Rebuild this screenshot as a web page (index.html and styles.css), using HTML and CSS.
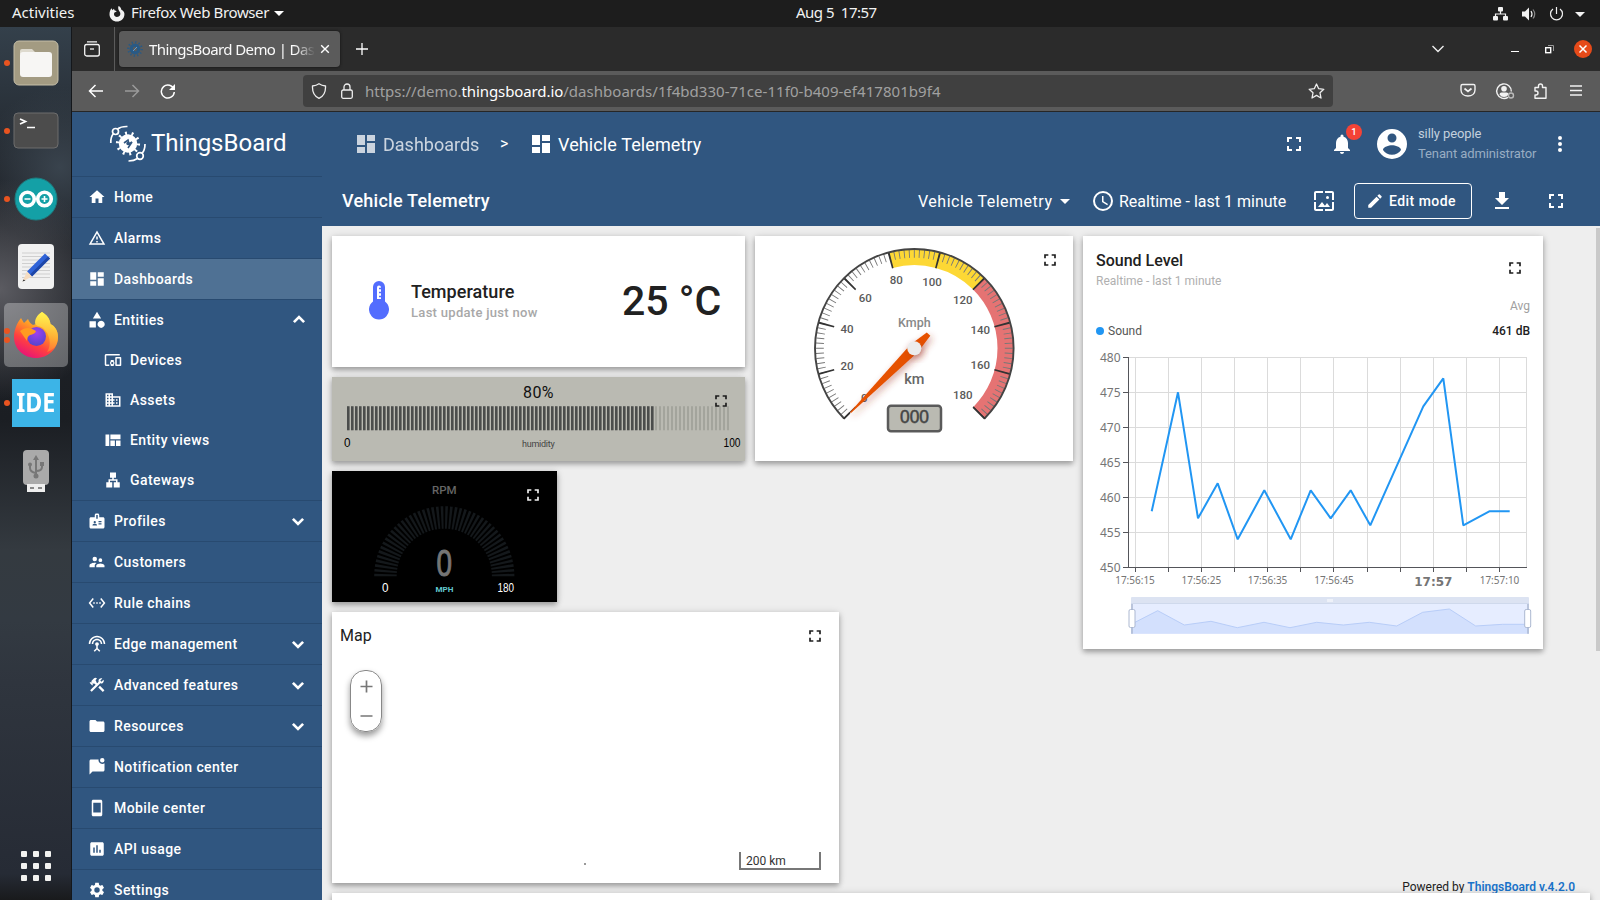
FILE: index.html
```html
<!DOCTYPE html>
<html lang="en">
<head>
<meta charset="utf-8">
<title>ThingsBoard Demo | Dashboards</title>
<link rel="stylesheet" href="styles.css">
</head>
<body>
<svg class="defs" width="0" height="0">
  <defs>
    <symbol id="dash" viewBox="0 0 24 24"><path d="M3 13h8V3H3v10zm0 8h8v-6H3v6zm10 0h8V11h-8v10zm0-18v6h8V3h-8z"/></symbol>
    <symbol id="full" viewBox="0 0 24 24"><path d="M7 14H5v5h5v-2H7v-3zm-2-4h2V7h3V5H5v5zm12 7h-3v2h5v-5h-2v3zM14 5v2h3v3h2V5h-5z"/></symbol>
    <symbol id="chev" viewBox="0 0 24 24"><path d="M5.2 9.2 12 15.8 18.8 9.2" fill="none" stroke="currentColor" stroke-width="3.6"/></symbol>
    <linearGradient id="ff" x1="0.8" y1="0" x2="0.3" y2="1"><stop offset="0" stop-color="#fff04a"/><stop offset=".4" stop-color="#ff9a26"/><stop offset=".7" stop-color="#ff4040"/><stop offset="1" stop-color="#e6127a"/></linearGradient>
    <radialGradient id="ffb" cx=".5" cy=".3" r=".8"><stop offset="0" stop-color="#a040f0"/><stop offset="1" stop-color="#4a45c8"/></radialGradient>
    <linearGradient id="ffy" x1=".6" y1="0" x2=".6" y2="1"><stop offset="0" stop-color="#fff550"/><stop offset="1" stop-color="#ff9a30" stop-opacity=".5"/></linearGradient>
  </defs>
</svg>

<div class="topbar">
  <span class="activities">Activities</span>
  <svg class="tb-fox" width="16" height="16" viewBox="0 0 16 16"><path d="M9.6 0c2 1 2.500 2.300 2.600 3.500C15 5 15.700 7 15.400 9c-.4 3.800-3.500 6.600-7.400 6.600S.6 12.500.5 8.500C.4 6 1.300 3.700 2.500 2.200l1 2 1.400-1.500.8 1.900c1 .1 1.500.4 2 .9l-2.200 1c-.8 1-.9 4.200 2.500 4.400 2.700 0 4-2.400 3-4.600C10.300 4.800 8.400 3 9.600 0z" fill="#f2f2f2"/></svg>
  <span class="appname">Firefox Web Browser</span>
  <i class="caret"></i>
  <span class="clock">Aug 5&nbsp; 17:57</span>
  <svg class="tray" width="100" height="20" viewBox="0 0 100 20"><g fill="#f2f2f2"><rect x="6" y="3" width="5" height="4.500" rx="1"/><rect x="1" y="12" width="5" height="4.500" rx="1"/><rect x="11" y="12" width="5" height="4.500" rx="1"/><path d="M30 7.500h3l4-4v13l-4-4h-3z"/><path d="m83 8 10 0-5 5z"/></g><g fill="none" stroke="#f2f2f2" stroke-width="1.200"><path d="M8.500 7v3M3.500 12v-2h10v2"/><path d="M39 7q2 3 0 6"/><path d="M41 5.500q3.500 4.500 0 9" opacity=".5"/><path d="M61 5a6 6 0 1 0 7 0M64.500 3v7"/></g></svg>
</div>

<div class="desktop">
<div class="dock">
  <div class="app run"><svg width="46" height="46" viewBox="0 0 46 46"><rect x="1" y="1" width="44" height="44" rx="5" fill="#a39b82" stroke="#c5bea8"/><path d="M7 14V11q0-2 2-2h10l3 3h-2v4z" fill="#dedace"/><rect x="7" y="12" width="32" height="25" rx="3" fill="#f7f6f4"/></svg></div>
  <div class="app run"><svg width="46" height="38" viewBox="0 0 46 38"><rect x="1" y="1" width="44" height="35" rx="4" fill="#4c4c4c" stroke="#6d6d6d"/><path d="m7 7 5.500 2.500L7 12M14 15.500h8" fill="none" stroke="#fff" stroke-width="1.700"/></svg></div>
  <div class="app run"><svg width="44" height="44" viewBox="0 0 44 44"><circle cx="22" cy="22" r="21" fill="#14a0a6" stroke="#1d7d80"/><g fill="none" stroke="#fff" stroke-width="3.600"><circle cx="13.500" cy="22" r="6.800"/><circle cx="30.500" cy="22" r="6.800"/></g><path d="M10.500 22h6M27.500 22h6M30.500 19v6" stroke="#fff" stroke-width="1.600"/></svg></div>
  <div class="app"><svg width="38" height="46" viewBox="0 0 38 46"><rect x="1" y="0" width="36" height="45" rx="4" fill="#f1f1f1"/><path d="M5 9h28M5 12.500h28M5 16h28M5 19.500h28M5 23h28M5 26.500h28M5 30h28M5 33.500h28" stroke="#cfcfcf"/><path d="m28 9.500 5 5-18 18-5-5z" fill="#2f63d8"/><path d="m31 12.500 2 2-18 18-2-2z" fill="#1d46a8"/><path d="m10 27.500 5 5-9.500 5z" fill="#f5dcc0"/><path d="m6.500 35.500 2 1-3 1z" fill="#333"/></svg></div>
  <div class="app run two active"><svg width="46" height="48" viewBox="0 0 46 48"><path d="M29 1c5 3 8 7 8.500 12C42 15 45 20 45 26c0 12-10 21-22 21S1 38 1 26C1 19 4 12 8 7l3 5 4-4c1 3 3 5 5 6l3-1C22 9 24 4 29 1z" fill="url(#ff)"/><path d="M29 1c5 3 8 7 8.500 12C42 15 45 20 45 26c0 9-5 13-11 15 5-7 3-18-4-24-3-2-8-2-8-5 0-4 2-8 7-11z" fill="url(#ffy)"/><circle cx="23.500" cy="25.500" r="9.500" fill="url(#ffb)"/><path d="M7 20c5-4 10-4 16 0-1 3-3 3-6 4-2 1-3 3-3 6z" fill="#ff9b20"/></svg></div>
  <div class="app run"><div class="ide"><span>IDE</span></div></div>
  <div class="app"><svg width="28" height="44" viewBox="0 0 28 44"><rect x="1" y="1" width="26" height="35" rx="4" fill="#aaa"/><rect x="5" y="35" width="18" height="8" fill="#eee"/><path d="M8 39h4M16 39h4" stroke="#888" stroke-width="2"/><g fill="none" stroke="#777" stroke-width="2"><path d="M14 9v17M8 16v3q0 4 6 5M20 15v3q0 4-6 4"/></g><path d="m14 6 3 5h-6z" fill="#777"/><circle cx="14" cy="27" r="2.500" fill="#777"/><circle cx="8" cy="15.500" r="2" fill="#777"/><rect x="18" y="13" width="4" height="4" fill="#777"/></svg></div>
  <svg class="apps" width="30" height="30" viewBox="0 0 30 30" fill="#f3f3f1"><rect width="6" height="6" rx="1"/><rect x="12" width="6" height="6" rx="1"/><rect x="24" width="6" height="6" rx="1"/><rect y="12" width="6" height="6" rx="1"/><rect x="12" y="12" width="6" height="6" rx="1"/><rect x="24" y="12" width="6" height="6" rx="1"/><rect y="24" width="6" height="6" rx="1"/><rect x="12" y="24" width="6" height="6" rx="1"/><rect x="24" y="24" width="6" height="6" rx="1"/></svg>
</div>

<div class="browser">
  <div class="tabbar">
    <div class="view"><svg width="16" height="16" viewBox="0 0 16 16" fill="none" stroke="#f4f4f4" stroke-width="1.300"><path d="M3 .8h10M1 3.500h14" stroke-width="1.200"/><rect x=".7" y="3.500" width="14.600" height="11.500" rx="2"/><path d="M6 8h4"/></svg></div>
    <div class="tab">
      <svg width="16" height="16" viewBox="0 0 16 16"><g stroke="#285a86"><circle cx="8" cy="8" r="3.800" fill="none" stroke-width="3.200"/><circle cx="8" cy="8" r="6.800" fill="none" stroke-width="2" stroke-dasharray="1.300 2.250"/></g><path d="m6 10 2-2 2-2" stroke="#5b9bd0" fill="none"/></svg>
      <span class="tabtext">ThingsBoard Demo | Dash</span>
      <svg width="10" height="10" viewBox="0 0 10 10"><path d="m1.200 1.200 7.600 7.600m0-7.600L1.200 8.800" stroke="#fff" stroke-width="1.400"/></svg>
    </div>
    <svg class="plus" width="12" height="12" viewBox="0 0 12 12"><path d="M6 0v12M0 6h12" stroke="#fff" stroke-width="1.300"/></svg>
    <div class="winctl">
      <svg width="14" height="10" viewBox="0 0 14 10"><path d="m1.500 2 5.500 5.500L12.500 2" fill="none" stroke="#eee" stroke-width="1.400"/></svg>
      <i class="min"></i>
      <svg class="max" width="9" height="9" viewBox="0 0 9 9" fill="none"><path d="M3 .5h5.500V6" stroke="#999"/><rect x=".7" y="2.700" width="5" height="5" stroke="#fff" stroke-width="1.400"/></svg>
      <svg class="cls" width="18" height="18" viewBox="0 0 18 18"><circle cx="9" cy="9" r="9" fill="#e64a19"/><path d="m5.500 5.500 7 7m0-7-7 7" stroke="#fff" stroke-width="1.500"/></svg>
    </div>
  </div>
  <div class="navbar">
    <svg class="back" width="16" height="14" viewBox="0 0 16 14" fill="none" stroke="#fff" stroke-width="1.500"><path d="M15 7H1.500M7.500 1l-6 6 6 6"/></svg>
    <svg class="fwd" width="16" height="14" viewBox="0 0 16 14" fill="none" stroke="#9a9a9a" stroke-width="1.500"><path d="M1 7h13.500M8.500 1l6 6-6 6"/></svg>
    <svg class="rel" width="16" height="16" viewBox="0 0 16 16" fill="none" stroke="#fff" stroke-width="1.500"><path d="M14 6.500A6.500 6.500 0 1 0 14.300 9"/><path d="M15 1v6H9z" fill="#fff" stroke="none"/></svg>
    <div class="url">
      <svg width="16" height="16" viewBox="0 0 16 16" fill="none" stroke="#eee" stroke-width="1.300"><path d="M8 .8c2 1.400 4 2 6.500 2.200C14.800 8.500 13 13 8 15.300 3 13 1.200 8.500 1.500 3 4 2.800 6 2.200 8 .8z"/></svg>
      <svg class="lock" width="12" height="16" viewBox="0 0 12 16" fill="none" stroke="#eee" stroke-width="1.300"><rect x=".7" y="7" width="10.600" height="8.300" rx="1.500"/><path d="M3 7V4a3 3 0 0 1 6 0v3"/></svg>
      <span class="urltext"><span class="u1">https://demo.</span><b>thingsboard.io</b><span class="u2">/dashboards/1f4bd330-71ce-11f0-b409-ef417801b9f4</span></span>
      <svg class="star" width="17" height="16" viewBox="0 0 17 16" fill="none" stroke="#eee" stroke-width="1.300" stroke-linejoin="round"><path d="m8.500 1 2.200 4.700 5.100.6-3.800 3.500 1 5.200-4.500-2.600L4 15l1-5.200L1.200 6.300l5.100-.6z"/></svg>
    </div>
    <svg class="navicons" width="124" height="18" viewBox="0 0 124 18" fill="none" stroke="#f2f2f2" stroke-width="1.400"><path d="M2.500 2.500h11q1.500 0 1.500 1.500v4c0 8-14 8-14 0V4q0-1.500 1.500-1.500z"/><path d="m4.500 6.500 3.500 3 3.500-3" stroke-width="1.700"/><path d="M48 15.300A7.300 7.300 0 1 1 51.300 9.500"/><circle cx="44" cy="6.800" r="2.800" fill="#f2f2f2" stroke="none"/><path d="M39.500 12.500q0-2 2-2h5q2 0 2 2-1.500 2.500-4.500 2.500t-4.500-2.500z" fill="#f2f2f2" stroke="none"/><circle cx="51" cy="13.500" r="2.500" stroke="#bbb"/><path d="M75 5.500h3.500V4a2 2 0 0 1 4 0v1.500H86v10.700H75V13h1a2 2 0 0 0 0-4h-1z" stroke-linejoin="round"/><path d="M110 4h12M110 8.500h12M110 13h12"/></svg>
  </div>

  <div class="page">
    <div class="side">
      <div class="logo">
        <svg width="38" height="38" viewBox="0 0 38 38" fill="none" stroke="#fff"><circle cx="19" cy="18.500" r="5.500" stroke-width="7.500"/><circle cx="19" cy="18.500" r="10.300" stroke-width="3.600" stroke-dasharray="1.900 4.570"/><g stroke-width="1.700"><circle cx="6.500" cy="6.500" r="3"/><circle cx="31" cy="31" r="3.300"/><path d="M8.500 4Q12 1.300 18.500 1.500M4.500 8.500Q1.500 12 1.800 18M33 28.500Q36 25 36 19M28.500 33.500Q25 36 19.500 36"/></g><path d="m15 18 4-3 1 4 3-2-4 6" stroke="#305680" stroke-width="1.600"/></svg>
        <span>ThingsBoard</span>
      </div>
      <div class="item"><svg width="18" height="18" viewBox="0 0 24 24"><path d="M10 20v-6h4v6h5v-8h3L12 3 2 12h3v8z"/></svg><span>Home</span></div>
      <div class="item"><svg width="18" height="18" viewBox="0 0 24 24"><path d="M12 5.990 19.530 19H4.470L12 5.990M12 2 1 21h22L12 2zm1 14h-2v2h2v-2zm0-6h-2v4h2v-4z"/></svg><span>Alarms</span></div>
      <div class="item sel"><svg width="18" height="18"><use href="#dash"/></svg><span>Dashboards</span></div>
      <div class="item open"><svg width="18" height="18" viewBox="0 0 24 24"><path d="m12 1-5.500 9h11zM17.500 13a4.750 4.750 0 1 0 .01 0zM2 13.500h8.500V22H2z"/></svg><span>Entities</span><svg class="ch up" width="18" height="18"><use href="#chev"/></svg></div>
      <div class="item sub"><svg width="18" height="18" viewBox="0 0 24 24"><path d="M3 6h18V4H3c-1.100 0-2 .9-2 2v12c0 1.100.9 2 2 2h4v-2H3V6zm10 6H9v1.780c-.61.550-1 1.330-1 2.220s.39 1.670 1 2.220V20h4v-1.780c.61-.55 1-1.340 1-2.220s-.39-1.670-1-2.220V12zm-2 5.500a1.500 1.500 0 1 1 0-3 1.500 1.500 0 0 1 0 3zM22 8h-6c-.5 0-1 .5-1 1v10c0 .5.5 1 1 1h6c.5 0 1-.5 1-1V9c0-.5-.5-1-1-1zm-1 10h-4v-8h4v8z"/></svg><span>Devices</span></div>
      <div class="item sub"><svg width="18" height="18" viewBox="0 0 24 24"><path d="M12 7V3H2v18h20V7H12zM6 19H4v-2h2v2zm0-4H4v-2h2v2zm0-4H4V9h2v2zm0-4H4V5h2v2zm4 12H8v-2h2v2zm0-4H8v-2h2v2zm0-4H8V9h2v2zm0-4H8V5h2v2zm10 12h-8v-2h2v-2h-2v-2h2v-2h-2V9h8v10zm-2-8h-2v2h2v-2zm0 4h-2v2h2v-2z"/></svg><span>Assets</span></div>
      <div class="item sub"><svg width="18" height="18" viewBox="0 0 24 24"><path d="M2 4.500h5V20H2zM8.500 4.500H22V11H8.500zM8.500 12.500h6V20h-6zM16 12.500h6V20h-6z"/></svg><span>Entity views</span></div>
      <div class="item sub"><svg width="18" height="18" viewBox="0 0 24 24"><path d="M13 22h8v-7h-3v-4h-5V9h3V2H8v7h3v2H6v4H3v7h8v-7H8v-2h8v2h-3z"/></svg><span>Gateways</span></div>
      <div class="item top"><svg width="18" height="18" viewBox="0 0 24 24"><path d="M20 7h-5V4c0-1.100-.9-2-2-2h-2c-1.100 0-2 .9-2 2v3H4c-1.100 0-2 .9-2 2v11c0 1.100.9 2 2 2h16c1.100 0 2-.9 2-2V9c0-1.100-.9-2-2-2zM9 12a1.500 1.500 0 1 1 0 3 1.500 1.500 0 0 1 0-3zm3 6H6v-.75c0-1 2-1.500 3-1.500s3 .5 3 1.500V18zm1-9h-2V4h2v5zm5 7.500h-4V15h4v1.500zm0-3h-4V12h4v1.500z"/></svg><span>Profiles</span><svg class="ch" width="18" height="18"><use href="#chev"/></svg></div>
      <div class="item"><svg width="18" height="18" viewBox="0 0 24 24"><path d="M16.500 12a2.500 2.500 0 1 0 0-5 2.500 2.500 0 0 0 0 5zM9 11a3 3 0 1 0 0-6 3 3 0 0 0 0 6zm7.500 3c-1.830 0-5.500.92-5.500 2.750V19h11v-2.250c0-1.830-3.670-2.750-5.500-2.750zM9 13c-2.330 0-7 1.170-7 3.500V19h7v-2.250c0-.85.330-2.340 2.370-3.470C10.500 13.100 9.660 13 9 13z"/></svg><span>Customers</span></div>
      <div class="item"><svg width="18" height="18" viewBox="0 0 24 24"><path d="M7.770 6.760 6.230 5.480.82 12l5.410 6.520 1.540-1.280L3.420 12l4.350-5.240zM7 13h2v-2H7v2zm10-2h-2v2h2v-2zm-6 2h2v-2h-2v2zm6.770-7.520-1.540 1.280L20.580 12l-4.350 5.240 1.540 1.280L23.180 12l-5.410-6.520z"/></svg><span>Rule chains</span></div>
      <div class="item"><svg width="18" height="18" viewBox="0 0 24 24"><path d="M12 5c-3.870 0-7 3.130-7 7h2c0-2.760 2.240-5 5-5s5 2.240 5 5h2c0-3.870-3.130-7-7-7zm1 9.290c.88-.39 1.500-1.260 1.500-2.290a2.500 2.500 0 0 0-5 0c0 1.020.62 1.900 1.500 2.290v3.300L7.590 21 9 22.410l3-3 3 3L16.410 21 13 17.590v-3.300zM12 1C5.930 1 1 5.930 1 12h2a9 9 0 0 1 18 0h2c0-6.070-4.930-11-11-11z"/></svg><span>Edge management</span><svg class="ch" width="18" height="18"><use href="#chev"/></svg></div>
      <div class="item"><svg width="18" height="18" viewBox="0 0 24 24"><path d="m13.783 15.172 2.121-2.121 5.996 5.996-2.121 2.121zM17.500 10c1.930 0 3.500-1.570 3.500-3.500 0-.58-.16-1.120-.41-1.600l-2.700 2.700-1.490-1.490 2.700-2.700c-.48-.25-1.020-.41-1.600-.41C15.570 3 14 4.570 14 6.500c0 .41.080.8.210 1.160l-1.850 1.850-1.780-1.780.71-.71-1.410-1.410L12 3.490a3 3 0 0 0-4.240 0L4.220 7.030l1.410 1.410H2.810l-.71.710 3.540 3.540.71-.71V9.150l1.410 1.410.71-.71 1.780 1.780-7.410 7.410 2.120 2.120L16.340 9.790c.36.130.75.210 1.160.21z"/></svg><span>Advanced features</span><svg class="ch" width="18" height="18"><use href="#chev"/></svg></div>
      <div class="item"><svg width="18" height="18" viewBox="0 0 24 24"><path d="M10 4H4c-1.100 0-2 .9-2 2v12c0 1.100.9 2 2 2h16c1.100 0 2-.9 2-2V8c0-1.100-.9-2-2-2h-8l-2-2z"/></svg><span>Resources</span><svg class="ch" width="18" height="18"><use href="#chev"/></svg></div>
      <div class="item"><svg width="18" height="18" viewBox="0 0 24 24"><path d="M22 6.980V16c0 1.100-.9 2-2 2H6l-4 4V4c0-1.100.9-2 2-2h10.100A5 5 0 0 0 19 8c1.130 0 2.160-.39 3-1.020zM16 3a3 3 0 1 0 6 0 3 3 0 0 0-6 0z"/></svg><span>Notification center</span></div>
      <div class="item"><svg width="18" height="18" viewBox="0 0 24 24"><path d="M17 1H7c-1.100 0-2 .9-2 2v18c0 1.100.9 2 2 2h10c1.100 0 2-.9 2-2V3c0-1.100-.9-2-2-2zm0 17H7V5h10v13z"/></svg><span>Mobile center</span></div>
      <div class="item"><svg width="18" height="18" viewBox="0 0 24 24"><path d="M19 3H5c-1.100 0-2 .9-2 2v14c0 1.100.9 2 2 2h14c1.100 0 2-.9 2-2V5c0-1.100-.9-2-2-2zM9 17H7v-7h2v7zm4 0h-2V7h2v10zm4 0h-2v-4h2v4z"/></svg><span>API usage</span></div>
      <div class="item"><svg width="18" height="18" viewBox="0 0 24 24"><path d="M19.140 12.940c.04-.3.060-.61.060-.94 0-.32-.02-.64-.07-.94l2.030-1.580c.18-.14.230-.41.120-.61l-1.920-3.320c-.12-.22-.37-.29-.59-.22l-2.390.96c-.5-.38-1.030-.7-1.620-.94l-.36-2.540c-.04-.24-.24-.41-.48-.41h-3.840c-.24 0-.43.170-.47.410l-.36 2.540c-.59.240-1.130.570-1.620.940l-2.390-.96c-.22-.08-.47 0-.59.220L2.740 8.870c-.12.210-.08.470.12.610l2.030 1.580c-.05.300-.09.630-.09.940s.02.640.07.940l-2.030 1.580c-.18.140-.23.410-.12.610l1.920 3.320c.12.220.370.290.590.220l2.390-.96c.5.380 1.030.7 1.620.940l.36 2.540c.05.240.24.410.48.410h3.840c.24 0 .44-.17.470-.41l.36-2.540c.59-.24 1.130-.56 1.620-.94l2.390.96c.22.080.47 0 .59-.22l1.920-3.320c.12-.22.070-.47-.12-.61l-2.010-1.580zM12 15.600A3.600 3.600 0 1 1 12 8.400a3.600 3.600 0 0 1 0 7.200z"/></svg><span>Settings</span></div>
    </div>

    <div class="main">
      <div class="head1">
        <svg class="dim" width="24" height="24" fill="#fff"><use href="#dash"/></svg>
        <span class="bc1">Dashboards</span><span class="gt">&gt;</span>
        <svg width="24" height="24" fill="#fff"><use href="#dash"/></svg>
        <span class="bc2">Vehicle Telemetry</span>
        <div class="user">
          <svg width="24" height="24" fill="#fff"><use href="#full"/></svg>
          <div class="bell"><svg width="24" height="24" viewBox="0 0 24 24" fill="#fff"><path d="M12 22c1.100 0 2-.9 2-2h-4c0 1.100.9 2 2 2zm6-6v-5c0-3.070-1.630-5.640-4.500-6.320V4a1.500 1.500 0 0 0-3 0v.68C7.640 5.360 6 7.920 6 11v5l-2 2v1h16v-1l-2-2z"/></svg><em>1</em></div>
          <svg class="ava" width="36" height="36" viewBox="0 0 24 24" fill="#fff"><path d="M12 2a10 10 0 1 0 0 20 10 10 0 0 0 0-20zm0 3a3 3 0 1 1 0 6 3 3 0 0 1 0-6zm0 14.200c-2.500 0-4.710-1.280-6-3.220.03-1.990 4-3.080 6-3.080 1.990 0 5.970 1.090 6 3.080a7.200 7.200 0 0 1-6 3.220z"/></svg>
          <div class="names"><span>silly people</span><span class="role">Tenant administrator</span></div>
          <svg width="24" height="24" viewBox="0 0 24 24" fill="#fff"><path d="M12 8a2 2 0 1 0 0-4 2 2 0 0 0 0 4zm0 2a2 2 0 1 0 0 4 2 2 0 0 0 0-4zm0 6a2 2 0 1 0 0 4 2 2 0 0 0 0-4z"/></svg>
        </div>
      </div>
      <div class="head2">
        <span class="title">Vehicle Telemetry</span>
        <div class="tools">
          <span class="state">Vehicle Telemetry</span><i class="caret"></i>
          <svg class="clk" width="24" height="24" viewBox="0 0 24 24" fill="#fff"><path d="M12 2a10 10 0 1 0 0 20 10 10 0 0 0 0-20zm0 18a8 8 0 1 1 0-16 8 8 0 0 1 0 16zm.5-13H11v6l5.200 3.200.8-1.300-4.500-2.700z"/></svg>
          <span class="rt">Realtime - last 1 minute</span>
          <svg class="img" width="24" height="24" viewBox="0 0 24 24" fill="#fff"><path d="M4 4h7V2H4c-1.100 0-2 .9-2 2v7h2V4zm6 9-4 5h12l-3-4-2.030 2.710L10 13zm7-4.500a1.500 1.500 0 1 0-3 0 1.500 1.500 0 0 0 3 0zM20 2h-7v2h7v7h2V4c0-1.100-.9-2-2-2zm0 18h-7v2h7c1.100 0 2-.9 2-2v-7h-2v7zM4 13H2v7c0 1.100.9 2 2 2h7v-2H4v-7z"/></svg>
          <div class="edit"><svg width="18" height="18" viewBox="0 0 24 24" fill="#fff"><path d="M3 17.250V21h3.750L17.810 9.940l-3.750-3.750L3 17.250zM20.710 7.040a1 1 0 0 0 0-1.410l-2.340-2.340a1 1 0 0 0-1.410 0l-1.830 1.830 3.750 3.750 1.830-1.830z"/></svg><span>Edit mode</span></div>
          <svg class="dl" width="24" height="24" viewBox="0 0 24 24" fill="#fff"><path d="M19 9h-4V3H9v6H5l7 7 7-7zM5 18v2h14v-2H5z"/></svg>
          <svg class="fs" width="24" height="24" fill="#fff"><use href="#full"/></svg>
        </div>
      </div>

      <div class="board">
        <div class="left">
          <div class="row">
            <div class="col">
              <div class="card temp">
                <svg width="20" height="39" viewBox="0 0 20 39"><path d="M4 6a6 6 0 0 1 12 0v14.500a10 10 0 1 1-12 0z" fill="#536dfe"/><path d="M8 6.500a2 2 0 0 1 4 0V18H8z" fill="#fff"/><path d="M10 7.500h2M10 11.500h2M10 15.500h2" stroke="#536dfe" stroke-width="1.500"/></svg>
                <div class="tl"><b>Temperature</b><span>Last update just now</span></div>
                <div class="tv">25 °C</div>
              </div>
              <div class="card humid">
                <svg width="413" height="84" viewBox="0 0 413 84">
                  <text class="r" x="206.300" y="20.500" font-size="16" text-anchor="middle" fill="#111" textLength="30.500">80%</text>
                  <path d="M15 41.200H398" stroke="#a3a49c" stroke-width="24" stroke-dasharray="2 2"/>
                  <path d="M15 41.200H322" stroke="#4b4d4c" stroke-width="24" stroke-dasharray="2.600 1.400"/>
                  <text class="lcd" x="12" y="70" font-size="13" textLength="6.500" lengthAdjust="spacingAndGlyphs">0</text>
                  <text class="lcd" x="391.500" y="70" font-size="13" textLength="17" lengthAdjust="spacingAndGlyphs">100</text>
                  <text class="r" x="190" y="70" font-size="9" textLength="32.700" fill="#444">humidity</text>
                </svg>
                <svg class="fi" width="20" height="20"><use href="#full"/></svg>
              </div>
            </div>
            <div class="card gauge">
              <svg width="318" height="225" viewBox="0 0 318 225">
                <defs><filter id="sh" x="-50%" y="-50%" width="200%" height="200%"><feDropShadow dx="2" dy="3" stdDeviation="3.500" flood-color="#a03020" flood-opacity=".45"/></filter></defs>
                <g transform="translate(159.300 112.300)" fill="none">
                  <path d="M-64.500 64.500A91.200 91.200 0 1 1 64.500 64.500" pathLength="270" stroke="#fdd835" stroke-width="16" stroke-dasharray="0 120 60 300"/>
                  <path d="M-64.500 64.500A91.200 91.200 0 1 1 64.500 64.500" pathLength="270" stroke="#e57373" stroke-width="16" stroke-dasharray="0 180 90 300"/>
                  <path d="M-66.800 66.800A94.500 94.500 0 1 1 66.800 66.800" pathLength="270" stroke="#777" stroke-width="8" stroke-dasharray=".55 2.450" stroke-dashoffset=".27"/>
                  <path d="M-64.500 64.500A91.200 91.200 0 1 1 64.500 64.500" pathLength="270" stroke="#333" stroke-width="16.500" stroke-dasharray="1.100 28.900" stroke-dashoffset=".55"/>
                  <path d="M-70.200 70.200A99.300 99.300 0 1 1 70.200 70.200" stroke="#444" stroke-width="1.900"/>
                  <path d="m-70.500 70.500 6-6M70.500 70.500 58.800 58.800" stroke="#333" stroke-width="1.700"/>
                </g>
                <g class="r m" font-size="11.500" fill="#5a5a5a" text-anchor="middle">
                  <text x="109.300" y="166.300">0</text><text x="92" y="134.300">20</text><text x="92" y="97.300">40</text><text x="110.300" y="66.300">60</text><text x="141.300" y="48.200">80</text><text x="177" y="50">100</text><text x="207.700" y="68.300">120</text><text x="225.300" y="98">140</text><text x="225.300" y="133.300">160</text><text x="207.700" y="163.300">180</text>
                  <text x="159.300" y="91" font-size="12.500" fill="#888">Kmph</text><text x="159.300" y="148" font-size="14.500" fill="#666">km</text>
                </g>
                <rect x="133" y="169.700" width="53" height="25.500" rx="3" fill="#babab2" stroke="#5a5a5a" stroke-width="2.500"/>
                <text class="lcd" x="145" y="187.300" font-size="17.500" fill="#444" stroke="#444" stroke-width=".5" textLength="29" lengthAdjust="spacingAndGlyphs">000</text>
                <path d="M95 176.200 155.500 108.500 171.800 96.500 175.300 99.700 163 116 96 177z" fill="#e65100" filter="url(#sh)"/>
                <circle cx="159.300" cy="112.300" r="7" fill="#ececec" filter="url(#sh)"/>
              </svg>
              <svg class="fi" width="20" height="20"><use href="#full"/></svg>
            </div>
          </div>
          <div class="card rpm">
            <svg width="225" height="131" viewBox="0 0 225 131">
              <text class="r m" x="112.300" y="23.300" font-size="11.500" text-anchor="middle" fill="#666">RPM</text>
              <path d="M53.450 105.300a58.850 58.850 0 0 1 117.700 0" pathLength="180" fill="none" stroke="#14181b" stroke-width="22.500" stroke-dasharray="2.200 1.751"/>
              <text class="lcd" x="104.500" y="105" font-size="36" fill="#757575" stroke="#757575" textLength="15.500" lengthAdjust="spacingAndGlyphs">0</text>
              <text class="lcd" x="50" y="121" font-size="12.500" fill="#fff" textLength="6.500" lengthAdjust="spacingAndGlyphs">0</text>
              <text class="lcd" x="165.500" y="121" font-size="12.500" fill="#fff" textLength="16.500" lengthAdjust="spacingAndGlyphs">180</text>
              <text class="r" x="103.500" y="121" font-size="7.500" font-weight="700" fill="#62c8ce" textLength="18" lengthAdjust="spacingAndGlyphs">MPH</text>
            </svg>
            <svg class="fi" width="20" height="20"><use href="#full"/></svg>
          </div>
          <div class="card map">
            <span class="mt">Map</span>
            <svg class="fi" width="20" height="20"><use href="#full"/></svg>
            <div class="zoomer"><svg width="30" height="60" viewBox="0 0 30 60" stroke="#777" stroke-width="1.700"><path d="M9.500 15.500h12M15.500 9.500v12M9.500 45h12"/></svg></div>
            <i class="dot"></i>
            <div class="scale">200 km</div>
          </div>
        </div>
        <div class="card sound">
          <div class="st"><b>Sound Level</b><span>Realtime - last 1 minute</span></div>
          <svg class="fi" width="20" height="20"><use href="#full"/></svg>
          <div class="avg">Avg</div>
          <div class="leg"><i></i><span>Sound</span><b>461 dB</b></div>
          <svg class="chart" width="460" height="300" viewBox="0 113 460 300">
            <path d="M46 121.500H444M46 156.500H444M46 191.500H444M46 226.500H444M46 261.500H444M46 296.500H444M52.500 121V331M85.500 121V331M118.500 121V331M151.500 121V331M184.500 121V331M217.500 121V331M250.500 121V331M284.500 121V331M317.500 121V331M350.500 121V331M383.500 121V331M416.500 121V331M443.500 121V331" stroke="#dbdbdb" fill="none"/>
            <path d="M45.500 121V332M40 121.500h6M40 156.500h6M40 191.500h6M40 226.500h6M40 261.500h6M40 296.500h6M40 331.500H444M52.500 331v5M85.500 331v5M118.500 331v5M151.500 331v5M184.500 331v5M217.500 331v5M250.500 331v5M284.500 331v5M317.500 331v5M350.500 331v5M383.500 331v5M416.500 331v5" stroke="#54555a" fill="none"/>
            <g class="n" font-size="12" fill="#757575" text-anchor="end"><text x="37.500" y="126">480</text><text x="37.500" y="161">475</text><text x="37.500" y="196">470</text><text x="37.500" y="231">465</text><text x="37.500" y="266">460</text><text x="37.500" y="301">455</text><text x="37.500" y="336">450</text></g>
            <g class="n" font-size="10" fill="#757575" text-anchor="middle"><text x="52" y="348">17:56:15</text><text x="118.300" y="348">17:56:25</text><text x="184.500" y="348">17:56:35</text><text x="251" y="348">17:56:45</text><text class="d" x="350.300" y="350" font-size="12">17:57</text><text x="416.500" y="348">17:57:10</text></g>
            <path d="M68.700 275.300 95 156.300 115 282.300 134.700 247.300 154.700 303.300 181.300 254.300 207.700 303.300 227.700 254.300 247.700 282.300 267.700 254.300 287.300 289.300 340.300 170.300 360.300 142.300 380.300 289.300 406.300 275.300H426.700" fill="none" stroke="#2196f3" stroke-width="2" stroke-linejoin="bevel"/>
            <rect x="48" y="361" width="398" height="7" rx="1" fill="#dce3f2"/><rect x="48" y="367.500" width="398" height="30.200" fill="#e6edff"/><path d="M48 367.500h398" stroke="#cfd9ec"/>
            <path d="M52 386.300 74.700 374.700 101.300 389 128 385.300 154.300 391.700 181 386.300 207 391.700 233.700 386.300 260.300 389 286.300 386.300 313.700 390 339.700 376.300 366.300 373 392.700 390 419.700 388.300H446V397.700H48V388z" fill="#d3e0fd"/>
            <path d="M52 386.300 74.700 374.700 101.300 389 128 385.300 154.300 391.700 181 386.300 207 391.700 233.700 386.300 260.300 389 286.300 386.300 313.700 390 339.700 376.300 366.300 373 392.700 390 419.700 388.300H442" fill="none" stroke="#b8cdf8"/>
            <path d="M245 363v3M247 363v3M249 363v3" stroke="#fff"/>
            <path d="M49 368v29.700M445 368v29.700" stroke="#acb8d1" stroke-width="1.500"/>
            <g fill="#fff" stroke="#acb8d1"><rect x="46" y="373.500" width="6" height="18" rx="1.500"/><rect x="441.700" y="373.500" width="6" height="18" rx="1.500"/></g>
          </svg>
        </div>
        <i class="scrollbar"></i>
        <div class="foot">Powered by <b>ThingsBoard v.4.2.0</b></div>
        <div class="card next"></div>
      </div>
    </div>
  </div>
</div>
</div>
</body>
</html>
```
FILE: styles.css
```css
* { box-sizing: border-box; }
body { margin: 0; width: 1600px; height: 900px; overflow: hidden; font-family: Roboto, sans-serif; background: #1d1d1d; }
svg { display: block; flex: none; }
.defs { position: absolute; }
span, b { white-space: nowrap; }

.topbar { height: 27px; display: flex; align-items: center; background: #1d1d1d; color: #f2f2f2; font: 15px/21px "Noto Sans", sans-serif; }
.topbar span { padding-bottom: 2px; }
.activities { width: 96px; padding-left: 12px; }
.tb-fox { margin-left: 13px; }
.appname { margin-left: 6px; width: 137px; letter-spacing: -.37px; }
.caret { border: 5px solid transparent; border-top-color: #fff; border-bottom: 0; margin-left: 6px; }
.clock { margin-left: 512px; letter-spacing: -.5px; }
.tray { margin-left: auto; margin-right: 8px; }

.desktop { display: flex; height: 873px; }
.dock { width: 72px; padding-top: 2px; display: flex; flex-direction: column; border-right: 1px solid #14171b;
  background: radial-gradient(circle at 0 30%, #5b5b61 0, transparent 110px), radial-gradient(circle at 60px 140px, #39434d 0, transparent 80px), linear-gradient(#34404b, #20242a 18%, #1b1e23 45%, #343a40 60%, #333a42 68%, #2f353e 75%, #262b35 97%, #191a1c); }
.app { height: 68px; display: flex; align-items: center; justify-content: center; position: relative; flex: none; }
.app.run::before { content: ""; position: absolute; left: 4px; top: 31px; width: 6px; height: 6px; border-radius: 3px; background: #e95420; }
.app.two::before { top: 27px; box-shadow: 0 9px #e95420; }
.app.active::after { content: ""; position: absolute; left: 4px; top: 2px; width: 64px; height: 64px; border-radius: 5px; background: #ffffff4d; z-index: 0; }
.app.active svg, .app.active::before { z-index: 1; }
.app.active svg { position: relative; }
.ide { width: 48px; height: 48px; background: #3cb4e7; color: #fff; font: 700 27px/46px "Noto Sans", sans-serif; display: flex; justify-content: center; }
.ide span { transform: scaleX(.86); }
.apps { margin: auto auto 19px 21px; }

.browser { width: 1528px; display: flex; flex-direction: column; }
.tabbar { height: 44px; background: #2b2b2b; display: flex; align-items: center; flex: none; }
.view { width: 43px; height: 44px; border-right: 1px solid #5b5b5b; display: flex; align-items: center; padding-left: 12px; }
.tab { margin-left: 4px; width: 221px; height: 36px; border-radius: 4px; background: #5b5b5b; display: flex; align-items: center; padding-left: 8px; box-shadow: 0 0 3px #111; }
.tabtext { width: 166px; margin: 0 5px 0 6px; color: #fafafa; font: 15px/22px "Noto Sans", sans-serif; letter-spacing: -.6px; -webkit-mask-image: linear-gradient(90deg, #000 88%, transparent); mask-image: linear-gradient(90deg, #000 88%, transparent); }
.plus { margin-left: 16px; }
.winctl { margin-left: auto; margin-right: 8px; display: flex; align-items: center; }
.min { width: 8px; height: 1px; background: #fff; margin: 5px 0 0 66px; }
.max { margin-left: 26px; }
.cls { margin-left: 20px; }
.navbar { height: 41px; background: #5b5b5b; border-bottom: 1px solid #262626; display: flex; align-items: center; flex: none; }
.back { margin-left: 16px; }
.fwd { margin-left: 20px; }
.rel { margin-left: 20px; }
.url { margin-left: 127px; width: 1030px; height: 32px; background: #404040; border-radius: 4px; display: flex; align-items: center; padding: 0 8px; }
.lock { margin-left: 14px; }
.urltext { margin-left: 12px; font: 15px "Noto Sans", sans-serif; color: #a0a0a0; flex: 1; }
.urltext b { color: #fff; font-weight: 400; letter-spacing: -.1px; }
.u2 { letter-spacing: .04px; }
.navicons { margin-left: 127px; }

.page { flex: 1; display: flex; min-height: 0; }
.side { width: 250px; background: #305680; color: #fff; overflow: hidden; flex: none; }
.logo { height: 65px; display: flex; align-items: center; padding-left: 37px; border-bottom: 1px solid #284a70; font-size: 24px; }
.logo span { margin: 0 0 2px 4px; }
.item { height: 41px; border-bottom: 1px solid #284a70; display: flex; align-items: center; padding-left: 16px; font-size: 14px; font-weight: 500; letter-spacing: .42px; }
.item svg { fill: #fff; }
.item span { margin-left: 8px; flex: 1; }
.item.sel { background: #4f7194; }
.item.open, .item.sub { height: 40px; border: 0; }
.item.sub { padding-left: 32px; }
.item.top { border-top: 1px solid #284a70; height: 42px; }
.ch { margin-right: 15px; color: #fff; }
.up { transform: rotate(180deg); margin-right: 14px; }

.main { flex: 1; display: flex; flex-direction: column; min-width: 0; }
.head1 { height: 64px; background: #305680; color: #fff; display: flex; align-items: center; padding-left: 32px; font-size: 18px; flex: none; }
.dim { opacity: .75; }
.bc1 { margin-left: 5px; opacity: .75; width: 97px; }
.gt { margin: 0 20px 2px 20px; width: 9px; font-size: 16px; }
.bc2 { margin-left: 5px; letter-spacing: .1px; }
.user { margin-left: auto; display: flex; align-items: center; padding-right: 28px; }
.bell { margin-left: 24px; position: relative; }
.bell em { position: absolute; left: 16px; top: -8px; width: 16px; height: 16px; border-radius: 8px; background: #f44336; font: 500 9.500px/16px Roboto, sans-serif; text-align: center; }
.ava { margin-left: 20px; }
.names { margin-left: 8px; width: 130px; display: flex; flex-direction: column; font-size: 13px; line-height: 20px; color: #c3d0dd; letter-spacing: -.1px; }
.role { color: #98adc3; }
.head2 { height: 50px; background: #305680; color: #fff; display: flex; align-items: center; padding-left: 20px; flex: none; }
.title { font-size: 18px; font-weight: 500; letter-spacing: .24px; margin-bottom: 2px; }
.tools { margin-left: auto; display: flex; align-items: center; font-size: 16px; padding-right: 32px; }
.state { width: 136px; letter-spacing: .5px; }
.clk { margin-left: 21px; }
.rt { margin-left: 4px; width: 168px; }
.img { margin-left: 25px; }
.edit { margin-left: 18px; width: 118px; height: 36px; border: 1px solid #fff; border-radius: 4px; display: flex; align-items: center; padding-left: 11px; font-size: 14px; font-weight: 500; letter-spacing: .45px; }
.edit span { margin-left: 5px; }
.dl { margin-left: 18px; }
.fs { margin-left: 30px; }

.board { flex: 1; background: #eee; display: flex; padding: 10px 0 0 10px; gap: 10px; position: relative; min-height: 0; overflow: hidden; align-items: flex-start; }
.left { width: 741px; display: flex; flex-direction: column; gap: 10px; }
.row { display: flex; gap: 10px; }
.col { display: flex; flex-direction: column; gap: 10px; }
.card { background: #fff; position: relative; box-shadow: 0 3px 5px rgba(0,0,0,.28), 0 1px 8px rgba(0,0,0,.14); flex: none; }
.fi { position: absolute; fill: #1c1c1c; }
.temp { width: 413px; height: 131px; display: flex; align-items: center; padding-left: 37px; }
.temp svg { margin-top: -3px; }
.tl { margin: 0 0 0 22px; display: flex; flex-direction: column; width: 211px; color: #212121; }
.tl b { font-size: 18px; line-height: 22px; font-weight: 500; letter-spacing: .05px; }
.tl span { font-size: 13px; line-height: 20px; font-weight: 500; color: #a8a8a8; letter-spacing: .3px; }
.tv { font-size: 41px; font-weight: 500; color: #212121; line-height: 50px; margin-bottom: 2px; }
.humid { width: 413px; height: 84px; background: #babab2; }
.humid .fi { left: 379px; top: 14px; }
.gauge { width: 318px; height: 225px; }
.gauge .fi { left: 284.5px; top: 14px; }
.rpm { width: 225px; height: 131px; background: #000; }
.rpm .fi { left: 191px; top: 14px; fill: #f0f0f0; }
.map { width: 507px; height: 271px; padding: 14px 8px; color: #212121; font-size: 16px; }
.map .fi { left: 472.5px; top: 14px; }
.zoomer { position: absolute; left: 18px; top: 58px; width: 32px; height: 62px; border: 1px solid #888; border-radius: 15px; box-shadow: 0 4px 6px #0006; }
.dot { position: absolute; left: 252px; top: 251px; width: 2px; height: 2px; background: #999; }
.scale { position: absolute; left: 407px; top: 240px; width: 82px; height: 18px; border: 2px solid #777; border-top: 0; font-size: 12px; line-height: 18px; padding-left: 5px; color: #333; }
.r { font-family: Roboto, sans-serif; }
.m { font-weight: 500; }
.n { font-family: "Noto Sans", sans-serif; }
.d { font-family: "DejaVu Sans", sans-serif; font-weight: 700; }
.lcd { font-family: "Liberation Sans Narrow", "Liberation Sans", sans-serif; }
.sound { width: 460px; height: 413px; padding: 13px 13px 0; }
.sound .fi { left: 422px; top: 22px; }
.st { display: flex; flex-direction: column; }
.st b { font-size: 16px; line-height: 24px; font-weight: 500; color: #212121; }
.st span { font-size: 12px; line-height: 17px; color: #b0b0b0; }
.avg { text-align: right; font-size: 12px; line-height: 16px; color: #a0a0a0; margin-top: 8px; }
.leg { display: flex; align-items: center; font-size: 12px; line-height: 16px; margin-top: 9px; color: #555; }
.leg i { width: 8px; height: 8px; border-radius: 4px; background: #2196f3; margin-right: 4px; }
.leg b { margin-left: auto; font-weight: 500; color: #212121; }
.chart { margin: 10px 0 0 -13px; }
.scrollbar { position: absolute; right: 0; top: 2px; width: 4px; height: 423px; background: #c9c9c9; }
.foot { position: absolute; right: 25px; top: 653px; font-size: 12px; line-height: 16px; color: #212121; }
.foot b { color: #1a73c9; font-weight: 600; }
.next { position: absolute; left: 10px; top: 667px; width: 1258px; height: 30px; }
```
